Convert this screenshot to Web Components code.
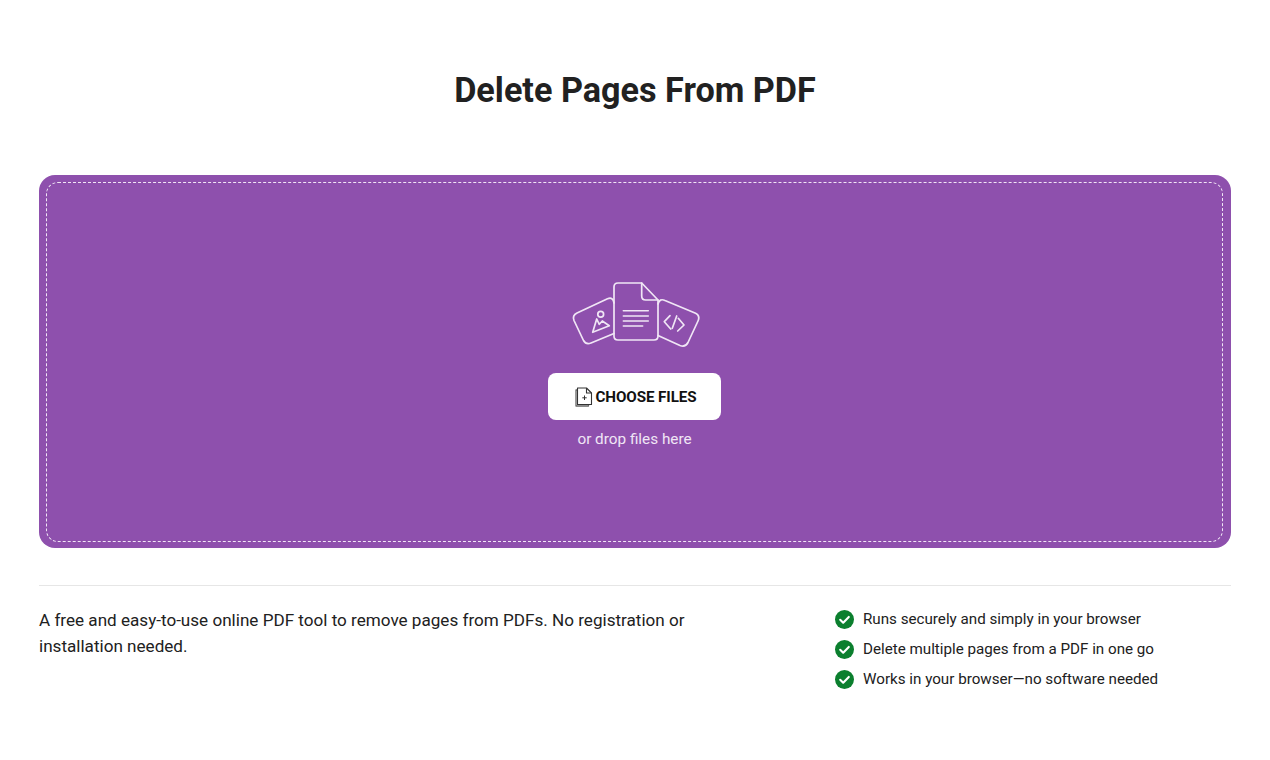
<!DOCTYPE html>
<html lang="en">
<head>
<meta charset="utf-8">
<title>Delete Pages From PDF</title>
<style>
  html, body { margin: 0; background: #fff; height: 100%; }
  body { font-family: Roboto, "Liberation Sans", sans-serif; color: #212121; overflow: hidden; }
</style>
</head>
<body>
<tool-page>
  <span slot="title">Delete Pages From PDF</span>
  <drop-zone slot="zone">or drop files here</drop-zone>
  <span slot="intro">A free and easy-to-use online PDF tool to remove pages from PDFs. No registration or installation needed.</span>
  <check-item slot="features">Runs securely and simply in your browser</check-item>
  <check-item slot="features">Delete multiple pages from a PDF in one go</check-item>
  <check-item slot="features">Works in your browser—no software needed</check-item>
</tool-page>

<script>
class ToolPage extends HTMLElement {
  constructor() {
    super();
    this.attachShadow({ mode: 'open' });
    this.shadowRoot.innerHTML = `
      <style>
        :host { display: block; padding: 0 39px; }
        h1 {
          margin: 0;
          padding-top: 70px;
          height: 175px;
          box-sizing: border-box;
          font-size: 34.2px;
          line-height: 41px;
          font-weight: 700;
          text-align: center;
          color: #212121;
        }
        .about {
          margin-top: 37px;
          border-top: 1px solid #e6e6e6;
          padding-top: 22px;
          display: flex;
          justify-content: space-between;
        }
        .intro {
          width: 680px;
          font-size: 17.1px;
          line-height: 25.5px;
          color: #212121;
        }
        .features {
          width: 396px;
          display: flex;
          flex-direction: column;
          gap: 10px;
          margin-top: 1px;
        }
      </style>
      <h1><slot name="title"></slot></h1>
      <slot name="zone"></slot>
      <div class="about">
        <div class="intro"><slot name="intro"></slot></div>
        <div class="features"><slot name="features"></slot></div>
      </div>
    `;
  }
}

class DropZone extends HTMLElement {
  constructor() {
    super();
    this.attachShadow({ mode: 'open' });
    this.shadowRoot.innerHTML = `
      <style>
        :host {
          display: block;
          height: 373px;
          box-sizing: border-box;
          padding: 7px 8px 6px 7px;
          background: #8e50ad;
          border-radius: 16px;
        }
        .inner {
          height: 100%;
          box-sizing: border-box;
          border: 1px dashed #f1e6f6;
          border-radius: 12px;
          display: flex;
          flex-direction: column;
          align-items: center;
          padding-top: 98px;
        }
        svg.art { display: block; width: 130px; height: 70px; }
        .hint {
          margin-top: 9.5px;
          font-size: 15.3px;
          line-height: 18px;
          color: #f0e6f5;
        }
      </style>
      <div class="inner">
        <svg class="art" viewBox="0 0 130 70" fill="none" stroke="#f0e6f5" stroke-width="1.7" stroke-linecap="round" stroke-linejoin="round">
          <!-- left card with picture -->
          <path d="M44 22 Q43 15.500 37.500 17.800 L7 32 Q2 34.500 4 39.500 L13.500 59.500 Q16 64 21 62 L44 52.500"/>
          <circle cx="30.700" cy="33.300" r="2.900"/>
          <path d="M26.700 38 L22.700 51.300 L39.300 44.700 L32.300 40 L29.300 43.300 Z"/>
          <!-- right card with code -->
          <path d="M88 23 Q89.500 17 95 19.500 L125 32 Q130.500 34.500 128 40 L118 61.500 Q115.500 66.500 110 64.500 L88 54.500"/>
          <path d="M100 34.700 L94.300 40.700 L100.700 48 M108.300 37.300 L114 44 L107.700 50 M106.700 35 L102.300 47.300"/>
          <!-- centre document -->
          <path d="M71.700 2 L48 2 Q44 2 44 6 L44 55 Q44 59 48 59 L84 59 Q88 59 88 55 L88 19 Z"/>
          <path d="M71.700 2 L71.700 15 Q71.700 19 75.700 19 L88 19"/>
          <path d="M53.300 29.700 H78.300 M53.300 35 H78.300 M53.300 40 H78.300 M53.300 45 H72.700" stroke-width="1.500"/>
        </svg>
        <choose-button>CHOOSE FILES</choose-button>
        <div class="hint"><slot></slot></div>
      </div>
    `;
  }
}

class ChooseButton extends HTMLElement {
  constructor() {
    super();
    this.attachShadow({ mode: 'open' });
    this.shadowRoot.innerHTML = `
      <style>
        :host {
          display: flex;
          align-items: center;
          justify-content: center;
          gap: 3px;
          box-sizing: border-box;
          padding-left: 2px;
          margin-top: 22px;
          width: 173px;
          height: 47px;
          background: #fff;
          border-radius: 8px;
          font-size: 15.2px;
          font-weight: 700;
          color: #111;
          letter-spacing: -0.1px;
        }
        svg { display: block; width: 18px; height: 20px; flex: none; }
      </style>
      <svg viewBox="0 0 18 20" fill="none" stroke="#333" stroke-width="1.100" stroke-linejoin="round">
        <path d="M2.500 3 H1 V19 H13.500 V17.500" stroke="#666" stroke-width="1.300"/>
        <path d="M2.500 1 H11.500 L16.500 6 V17.500 H2.500 Z" fill="#fff"/>
        <path d="M11.500 1 V6 H16.500"/>
        <path d="M9.500 8.500 V13 M7.300 10.800 H11.700" stroke-width="1"/>
      </svg>
      <slot></slot>
    `;
  }
}

class CheckItem extends HTMLElement {
  constructor() {
    super();
    this.attachShadow({ mode: 'open' });
    this.shadowRoot.innerHTML = `
      <style>
        :host {
          display: flex;
          align-items: center;
          gap: 9px;
          height: 20px;
          font-size: 15.18px;
          color: #212121;
        }
        svg { display: block; width: 19px; height: 19px; flex: none; }
      </style>
      <svg viewBox="0 0 19 19">
        <circle cx="9.500" cy="9.500" r="9.500" fill="#0b7f2e"/>
        <path d="M5.200 9.800 L8.200 12.700 L13.800 6.900" fill="none" stroke="#fff" stroke-width="2.100" stroke-linecap="round" stroke-linejoin="round"/>
      </svg>
      <span><slot></slot></span>
    `;
  }
}

customElements.define('choose-button', ChooseButton);
customElements.define('check-item', CheckItem);
customElements.define('drop-zone', DropZone);
customElements.define('tool-page', ToolPage);
</script>
</body>
</html>
